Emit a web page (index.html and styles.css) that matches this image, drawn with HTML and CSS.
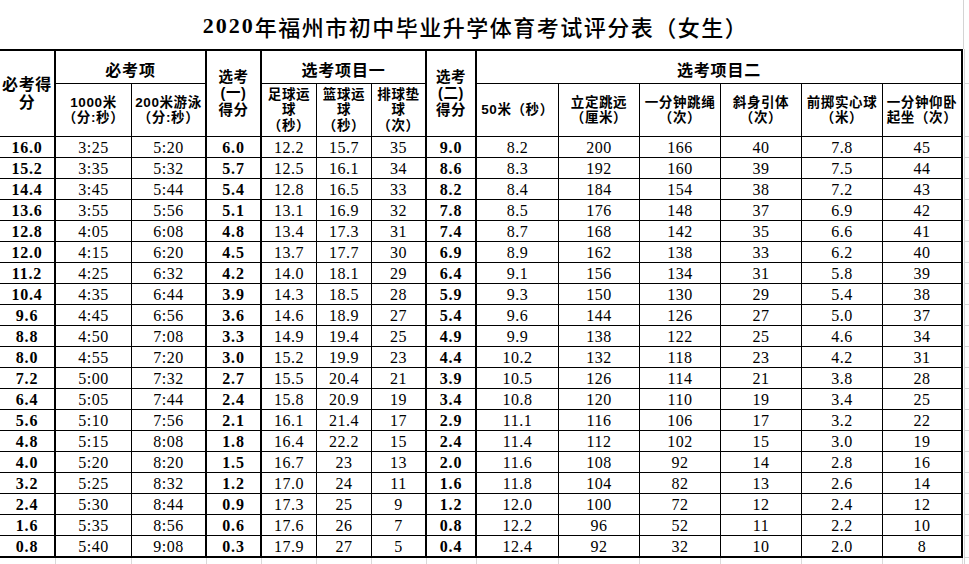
FILE: index.html
```html
<!DOCTYPE html>
<html lang="zh-CN">
<head>
<meta charset="utf-8">
<title>2020年福州市初中毕业升学体育考试评分表（女生）</title>
<link rel="stylesheet" href="styles.css">
</head>
<body>
<div class="title-row">
  <div class="title"><span class="yr">2020</span>年福州市初中毕业升学体育考试评分表（女生）</div>
  <div class="title-strip"></div>
</div>
<div class="sheet">
  <div class="hc top rs2 thick big">必考得<br>分</div>
  <div class="hc top cs2 thick grp">必考项</div>
  <div class="hc top rs2 thick mid">选考<br>(一)<br>得分</div>
  <div class="hc top cs3 thick grp">选考项目一</div>
  <div class="hc top rs2 thick mid">选考<br>(二)<br>得分</div>
  <div class="hc top cs6 thick grp">选考项目二</div>
  <div class="gl"></div>

  <div class="hc sub">1000米<br>（分:秒）</div>
  <div class="hc sub thick">200米游泳<br>（分:秒）</div>
  <div class="hc sub">足球运<br>球<br>（秒）</div>
  <div class="hc sub">篮球运<br>球<br>（秒）</div>
  <div class="hc sub thick">排球垫<br>球<br>（次）</div>
  <div class="hc sub">50米（秒）</div>
  <div class="hc sub">立定跳远<br>（厘米）</div>
  <div class="hc sub">一分钟跳绳<br>（次）</div>
  <div class="hc sub">斜身引体<br>（次）</div>
  <div class="hc sub">前掷实心球<br>（米）</div>
  <div class="hc sub thick">一分钟仰卧<br>起坐（次）</div>
  <div class="gl"></div>

  <div class="row"><div>16.0</div><div>3:25</div><div>5:20</div><div>6.0</div><div>12.2</div><div>15.7</div><div>35</div><div>9.0</div><div>8.2</div><div>200</div><div>166</div><div>40</div><div>7.8</div><div>45</div><div></div></div>
  <div class="row"><div>15.2</div><div>3:35</div><div>5:32</div><div>5.7</div><div>12.5</div><div>16.1</div><div>34</div><div>8.6</div><div>8.3</div><div>192</div><div>160</div><div>39</div><div>7.5</div><div>44</div><div></div></div>
  <div class="row"><div>14.4</div><div>3:45</div><div>5:44</div><div>5.4</div><div>12.8</div><div>16.5</div><div>33</div><div>8.2</div><div>8.4</div><div>184</div><div>154</div><div>38</div><div>7.2</div><div>43</div><div></div></div>
  <div class="row"><div>13.6</div><div>3:55</div><div>5:56</div><div>5.1</div><div>13.1</div><div>16.9</div><div>32</div><div>7.8</div><div>8.5</div><div>176</div><div>148</div><div>37</div><div>6.9</div><div>42</div><div></div></div>
  <div class="row"><div>12.8</div><div>4:05</div><div>6:08</div><div>4.8</div><div>13.4</div><div>17.3</div><div>31</div><div>7.4</div><div>8.7</div><div>168</div><div>142</div><div>35</div><div>6.6</div><div>41</div><div></div></div>
  <div class="row"><div>12.0</div><div>4:15</div><div>6:20</div><div>4.5</div><div>13.7</div><div>17.7</div><div>30</div><div>6.9</div><div>8.9</div><div>162</div><div>138</div><div>33</div><div>6.2</div><div>40</div><div></div></div>
  <div class="row"><div>11.2</div><div>4:25</div><div>6:32</div><div>4.2</div><div>14.0</div><div>18.1</div><div>29</div><div>6.4</div><div>9.1</div><div>156</div><div>134</div><div>31</div><div>5.8</div><div>39</div><div></div></div>
  <div class="row"><div>10.4</div><div>4:35</div><div>6:44</div><div>3.9</div><div>14.3</div><div>18.5</div><div>28</div><div>5.9</div><div>9.3</div><div>150</div><div>130</div><div>29</div><div>5.4</div><div>38</div><div></div></div>
  <div class="row"><div>9.6</div><div>4:45</div><div>6:56</div><div>3.6</div><div>14.6</div><div>18.9</div><div>27</div><div>5.4</div><div>9.6</div><div>144</div><div>126</div><div>27</div><div>5.0</div><div>37</div><div></div></div>
  <div class="row"><div>8.8</div><div>4:50</div><div>7:08</div><div>3.3</div><div>14.9</div><div>19.4</div><div>25</div><div>4.9</div><div>9.9</div><div>138</div><div>122</div><div>25</div><div>4.6</div><div>34</div><div></div></div>
  <div class="row"><div>8.0</div><div>4:55</div><div>7:20</div><div>3.0</div><div>15.2</div><div>19.9</div><div>23</div><div>4.4</div><div>10.2</div><div>132</div><div>118</div><div>23</div><div>4.2</div><div>31</div><div></div></div>
  <div class="row"><div>7.2</div><div>5:00</div><div>7:32</div><div>2.7</div><div>15.5</div><div>20.4</div><div>21</div><div>3.9</div><div>10.5</div><div>126</div><div>114</div><div>21</div><div>3.8</div><div>28</div><div></div></div>
  <div class="row"><div>6.4</div><div>5:05</div><div>7:44</div><div>2.4</div><div>15.8</div><div>20.9</div><div>19</div><div>3.4</div><div>10.8</div><div>120</div><div>110</div><div>19</div><div>3.4</div><div>25</div><div></div></div>
  <div class="row"><div>5.6</div><div>5:10</div><div>7:56</div><div>2.1</div><div>16.1</div><div>21.4</div><div>17</div><div>2.9</div><div>11.1</div><div>116</div><div>106</div><div>17</div><div>3.2</div><div>22</div><div></div></div>
  <div class="row"><div>4.8</div><div>5:15</div><div>8:08</div><div>1.8</div><div>16.4</div><div>22.2</div><div>15</div><div>2.4</div><div>11.4</div><div>112</div><div>102</div><div>15</div><div>3.0</div><div>19</div><div></div></div>
  <div class="row"><div>4.0</div><div>5:20</div><div>8:20</div><div>1.5</div><div>16.7</div><div>23</div><div>13</div><div>2.0</div><div>11.6</div><div>108</div><div>92</div><div>14</div><div>2.8</div><div>16</div><div></div></div>
  <div class="row"><div>3.2</div><div>5:25</div><div>8:32</div><div>1.2</div><div>17.0</div><div>24</div><div>11</div><div>1.6</div><div>11.8</div><div>104</div><div>82</div><div>13</div><div>2.6</div><div>14</div><div></div></div>
  <div class="row"><div>2.4</div><div>5:30</div><div>8:44</div><div>0.9</div><div>17.3</div><div>25</div><div>9</div><div>1.2</div><div>12.0</div><div>100</div><div>72</div><div>12</div><div>2.4</div><div>12</div><div></div></div>
  <div class="row"><div>1.6</div><div>5:35</div><div>8:56</div><div>0.6</div><div>17.6</div><div>26</div><div>7</div><div>0.8</div><div>12.2</div><div>96</div><div>52</div><div>11</div><div>2.2</div><div>10</div><div></div></div>
  <div class="row last"><div>0.8</div><div>5:40</div><div>9:08</div><div>0.3</div><div>17.9</div><div>27</div><div>5</div><div>0.4</div><div>12.4</div><div>92</div><div>32</div><div>10</div><div>2.0</div><div>8</div><div></div></div>

  <div class="foot"><div></div><div></div><div></div><div></div><div></div><div></div><div></div><div></div><div></div><div></div><div></div><div></div><div></div><div></div><div></div></div>
</div>
</body>
</html>
```

FILE: styles.css
```css
html, body {
  margin: 0;
  padding: 0;
  background: #fff;
}

body {
  width: 969px;
  height: 564px;
  overflow: hidden;
  color: #000;
  font-family: "Liberation Serif", "Noto Sans CJK SC", serif;
}

/* ---------- title ---------- */
.title-row {
  display: flex;
  height: 49px;
}

.title {
  width: 963px;
  box-sizing: border-box;
  display: flex;
  align-items: center;
  justify-content: center;
  padding: 3px 12px 0 0;
  font-family: "Liberation Serif", "Noto Sans CJK SC", serif;
  font-size: 22px;
  font-weight: 500;
  letter-spacing: 1.5px;
  white-space: nowrap;
}

.title .yr {
  font-weight: 700;
  letter-spacing: 2px;
}

.title-strip {
  width: 6px;
  box-sizing: border-box;
  border-left: 1px solid #d4d4d4;
}

/* ---------- sheet grid ---------- */
.sheet {
  display: grid;
  grid-template-columns: 56px 76px 75px 55px 55px 55px 55px 50px 82px 81px 81px 81px 81px 80px 6px;
  grid-template-rows: 35px 53px repeat(19, 21px) 22px 6px;
}

.sheet div {
  box-sizing: border-box;
}

.hc {
  display: flex;
  align-items: center;
  justify-content: center;
  text-align: center;
  border-right: 1px solid #000;
  border-bottom: 1px solid #000;
  font-family: "Liberation Sans", "Noto Sans CJK SC", sans-serif;
  font-weight: 700;
  white-space: nowrap;
}

.top { border-top: 2px solid #000; }
.rs2 { grid-row: span 2; }
.cs2 { grid-column: span 2; }
.cs3 { grid-column: span 3; }
.cs6 { grid-column: span 6; }
.thick { border-right-width: 2px; }

.big {
  font-size: 16px;
  line-height: 18px;
  letter-spacing: 0.7px;
}

.mid {
  font-size: 14.5px;
  line-height: 16.3px;
  letter-spacing: 0.6px;
}

.grp {
  font-size: 16px;
  letter-spacing: 0.8px;
  padding-top: 4px;
}

.sub {
  font-size: 13.5px;
  line-height: 15.4px;
  letter-spacing: 0.6px;
  padding-top: 0;
}

.gl {
  margin-left: 1px;
  border-left: 1px solid #d4d4d4;
  border-bottom: 1px solid #d4d4d4;
}

/* ---------- data rows ---------- */
.row { display: contents; }

.row > div {
  display: flex;
  align-items: center;
  justify-content: center;
  padding-top: 2px;
  border-right: 1px solid #000;
  border-bottom: 1px solid #000;
  font-family: "Liberation Serif", serif;
  font-size: 16px;
  letter-spacing: 0.5px;
}

.row > div:nth-child(1),
.row > div:nth-child(4),
.row > div:nth-child(8) {
  font-weight: 700;
  letter-spacing: 0.8px;
}

.row > div:nth-child(1),
.row > div:nth-child(3),
.row > div:nth-child(4),
.row > div:nth-child(7),
.row > div:nth-child(8),
.row > div:nth-child(14) {
  border-right-width: 2px;
}

.row > div:nth-child(15) {
  margin-left: 1px;
  border-right: 0;
  border-left: 1px solid #d4d4d4;
  border-bottom: 1px solid #d4d4d4;
}

.row.last > div:not(:nth-child(15)) {
  border-bottom-width: 2px;
}

/* ---------- gridlines below the table ---------- */
.foot { display: contents; }

.foot > div {
  border-right: 1px solid #d9d9d9;
}

.foot > div:nth-child(15) {
  margin-left: 1px;
  border-right: 0;
  border-left: 1px solid #d4d4d4;
}
```
